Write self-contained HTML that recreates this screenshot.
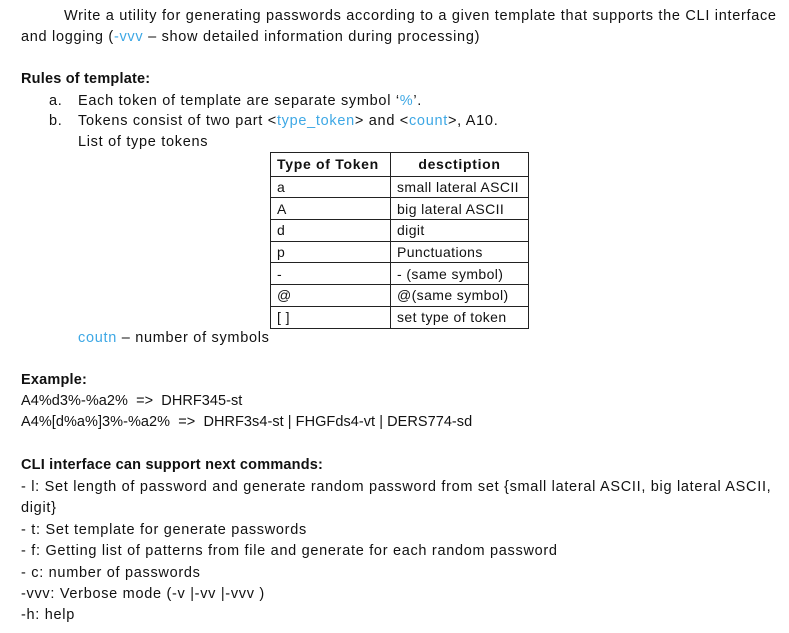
<!DOCTYPE html>
<html><head><meta charset="utf-8"><style>
body{margin:0;width:789px;height:633px;background:#fff;position:relative;overflow:hidden;font-family:"Liberation Sans",sans-serif;font-size:14.5px;color:#111;letter-spacing:0.7px}
.l{position:absolute;white-space:nowrap;line-height:18px}
.b{font-weight:bold;letter-spacing:0.2px}
.c{color:#3ea8e5}
.e{letter-spacing:0.05px}
table{position:absolute;left:270px;top:152px;border-collapse:collapse;width:259px}
td{border:1px solid #222;height:20.7px;padding:0 0 0 6px;line-height:18px;white-space:nowrap;font-size:14px;letter-spacing:0.4px}
th{border:1px solid #222;height:20.7px;font-weight:bold;white-space:nowrap;font-size:14px}
</style></head><body>
<div class="l" style="left:64px;top:7px">Write a utility for generating passwords according to a given template that supports the CLI interface</div>
<div class="l" style="left:21px;top:28px">and logging (<span class="c">-vvv</span> – show detailed information during processing)</div>
<div class="l b" style="left:21px;top:70px">Rules of template:</div>
<div class="l" style="left:49px;top:92px">a.</div>
<div class="l" style="left:78px;top:92px">Each token of template are separate symbol ‘<span class="c">%</span>’.</div>
<div class="l" style="left:49px;top:112px">b.</div>
<div class="l" style="left:78px;top:112px">Tokens consist of two part &lt;<span class="c">type_token</span>&gt; and &lt;<span class="c">count</span>&gt;, A10.</div>
<div class="l" style="left:78px;top:133px">List of type tokens</div>
<table>
<tr><th style="width:112px;text-align:left;padding-left:6px">Type of Token</th><th style="text-align:center">desctiption</th></tr>
<tr><td>a</td><td>small lateral ASCII</td></tr>
<tr><td>A</td><td>big lateral ASCII</td></tr>
<tr><td>d</td><td>digit</td></tr>
<tr><td>p</td><td>Punctuations</td></tr>
<tr><td>-</td><td>- (same symbol)</td></tr>
<tr><td>@</td><td>@(same symbol)</td></tr>
<tr><td>[ ]</td><td>set type of token</td></tr>
</table>
<div class="l" style="left:78px;top:329px"><span class="c">coutn</span> – number of symbols</div>
<div class="l b" style="left:21px;top:371px">Example:</div>
<div class="l e" style="left:21px;top:392px">A4%d3%-%a2% &nbsp;=&gt; &nbsp;DHRF345-st</div>
<div class="l e" style="left:21px;top:413px">A4%[d%a%]3%-%a2% &nbsp;=&gt; &nbsp;DHRF3s4-st | FHGFds4-vt | DERS774-sd</div>
<div class="l b" style="left:21px;top:456px">CLI interface can support next commands:</div>
<div class="l" style="left:21px;top:478px">- l: Set length of password and generate random password from set {small lateral ASCII, big lateral ASCII,</div>
<div class="l" style="left:21px;top:499px">digit}</div>
<div class="l" style="left:21px;top:521px">- t: Set template for generate passwords</div>
<div class="l" style="left:21px;top:542px">- f: Getting list of patterns from file and generate for each random password</div>
<div class="l" style="left:21px;top:564px">- c: number of passwords</div>
<div class="l" style="left:21px;top:585px">-vvv: Verbose mode (-v |-vv |-vvv )</div>
<div class="l" style="left:21px;top:606px">-h: help</div>
</body></html>
